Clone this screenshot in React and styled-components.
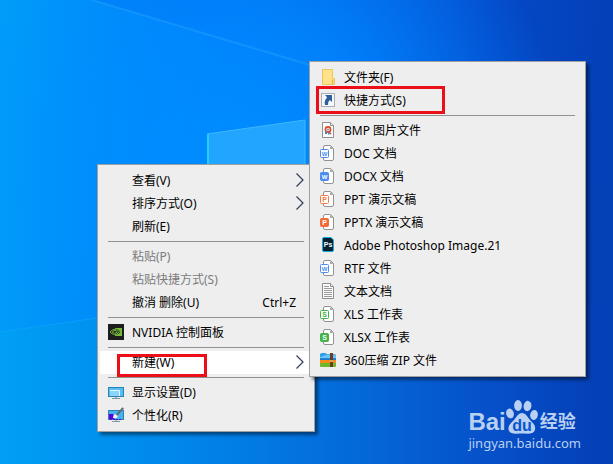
import styled, { createGlobalStyle, css } from "styled-components";

const GlobalStyle = createGlobalStyle`
  * {
    box-sizing: border-box;
  }

  body {
    margin: 0;
    font-family: 'Noto Sans', 'Noto Sans CJK SC', sans-serif;
  }
`;

const Desktop = styled.main`
  position: relative;
  min-height: 100vh;
  overflow: hidden;
  background: #0567dc;
`;

const WallpaperArt = styled.svg`
  position: absolute;
  inset: 0;
  width: 100%;
  height: 100%;
`;

const Menu = styled.div`
  position: absolute;
  top: ${({ $top }) => $top}px;
  left: ${({ $left }) => $left}px;
  width: ${({ $width }) => $width}px;
  padding: 4px 2px;
  background: #eeeeee;
  border: 1px solid #a0a0a0;
  box-shadow: 3px 3px 3px rgba(0, 0, 0, 0.45);
`;

const MenuItem = styled.button`
  display: flex;
  align-items: center;
  gap: 8px;
  width: 100%;
  height: 23px;
  padding: 3px 8px 4px;
  border: 0;
  background: ${({ $active }) => ($active ? "#ffffff" : "transparent")};
  color: #000;
  font-family: inherit;
  font-size: 12px;
  line-height: 16px;
  text-align: left;
  white-space: nowrap;

  &:hover {
    background: #ffffff;
  }

  &:disabled {
    color: #7b7b7b;
    background: transparent;
  }
`;

const IconSlot = styled.span`
  flex: none;
  width: 16px;
  height: 16px;

  svg {
    display: block;
  }
`;

const Label = styled.span`
  flex: 1;
  padding-top: 2px;
`;

const Shortcut = styled.span`
  padding: 2px 8px 0 0;
`;

const Separator = styled.hr`
  height: 1px;
  margin: 3px 8px;
  border: 0;
  background: #919191;
`;

const Highlight = styled.div`
  position: absolute;
  top: ${({ $top }) => $top}px;
  left: ${({ $left }) => $left}px;
  width: ${({ $width }) => $width}px;
  height: ${({ $height }) => $height}px;
  border: 3px solid #ec0f17;
  pointer-events: none;
`;

const watermarkText = css`
  color: #b9d0f2;
  white-space: nowrap;
`;

const Watermark = styled.div`
  position: absolute;
  right: 32px;
  bottom: 12px;
  ${watermarkText}
`;

const Brand = styled.div`
  display: flex;
  align-items: flex-end;
  height: 34px;
  font-family: 'Liberation Sans', 'Noto Sans CJK SC', sans-serif;
  font-size: 24px;
  font-weight: 700;
  line-height: 24px;
`;

const BrandName = styled.span`
  font-size: 18px;
  padding-left: 2px;
`;

const SiteLink = styled.a`
  ${watermarkText}
  display: block;
  font-size: 13px;
  line-height: 18px;
  text-decoration: none;
`;

function Wallpaper() {
  return (
    <WallpaperArt viewBox="0 0 613 464" preserveAspectRatio="xMinYMin slice" aria-hidden="true">
      <defs>
        <linearGradient id="sky" x1="0" y1="0" x2="613" y2="60" gradientUnits="userSpaceOnUse">
          <stop offset="0" stopColor="#0093f8" />
          <stop offset="0.3" stopColor="#0078f2" />
          <stop offset="0.55" stopColor="#0460e0" />
          <stop offset="0.8" stopColor="#0449c8" />
          <stop offset="1" stopColor="#0440b6" />
        </linearGradient>
        <radialGradient id="glow" cx="250" cy="150" r="310" gradientUnits="userSpaceOnUse">
          <stop offset="0" stopColor="#008cff" />
          <stop offset="0.4" stopColor="#0086ff" stopOpacity="0.85" />
          <stop offset="1" stopColor="#0080ff" stopOpacity="0" />
        </radialGradient>
        <linearGradient id="beam" x1="0" y1="0" x2="330" y2="0" gradientUnits="userSpaceOnUse">
          <stop offset="0" stopColor="#00a4fb" />
          <stop offset="1" stopColor="#0088ff" stopOpacity="0" />
        </linearGradient>
        <linearGradient id="floor" x1="0" y1="0" x2="613" y2="0" gradientUnits="userSpaceOnUse">
          <stop offset="0" stopColor="#009ff5" />
          <stop offset="0.3" stopColor="#0086ea" />
          <stop offset="0.55" stopColor="#046cdc" />
          <stop offset="0.8" stopColor="#0650c9" />
          <stop offset="0.94" stopColor="#0443bb" />
          <stop offset="1" stopColor="#0442b8" stopOpacity="0" />
        </linearGradient>
      </defs>
      <rect width="613" height="464" fill="url(#sky)" />
      <rect width="613" height="464" fill="url(#glow)" />
      <path d="M0 0h92l218 65v290L0 390z" fill="url(#beam)" opacity="0.6" />
      <path d="M0 332L97 318 330 340 613 300v164H0z" fill="url(#floor)" />
      <path d="M92 0L310 65" stroke="#1c9cff" strokeWidth="2" opacity="0.6" />
      <path d="M0 332L97 318" stroke="#1cb0ff" strokeWidth="1" opacity="0.4" />
      <path d="M207 134L305 120V260H207z" fill="#22a5ff" />
      <path d="M208 260V134" stroke="#22d0ff" strokeWidth="2" />
      <path d="M207 134L305 120V260" stroke="#3db8ff" fill="none" />
    </WallpaperArt>
  );
}

function Svg({ children }) {
  return (
    <svg width="16" height="16" viewBox="0 0 16 16" aria-hidden="true">
      {children}
    </svg>
  );
}

function Page({ x = 2 }) {
  return (
    <>
      <path d={`M${x + 0.5} 0.5H10.5L13.5 3.5V15.5H${x + 0.5}z`} fill="#fbfbfb" stroke="#8e8e8e" />
      <path d="M10.5 0.5V3.5H13.5" fill="#eeeeee" stroke="#8e8e8e" />
    </>
  );
}

function OfficeIcon({ color, letter, filled }) {
  return (
    <Svg>
      <path
        d="M3.5 4V2Q3.5 0.5 5 0.5H10.5L13.5 3.5V14Q13.5 15.5 12 15.5H5Q3.5 15.5 3.5 14z"
        fill="#fff"
        stroke="#929292"
      />
      <path d="M10 1V4H13.5z" fill="#a6a6a6" />
      <rect x="0.5" y="4.5" width="8" height="8" rx="1" fill={filled ? color : "#fff"} stroke={color} />
      <text
        x="4.5"
        y="11"
        fontSize={letter === "W" ? 6 : 7}
        fontWeight="700"
        fontFamily="Liberation Sans, sans-serif"
        textAnchor="middle"
        fill={filled ? "#fff" : color}
      >
        {letter}
      </text>
    </Svg>
  );
}

const FolderIcon = () => (
  <Svg>
    <path d="M2.5 0.5H12.5V9.5H14.5V15.5H2.5z" fill="#ffe28a" stroke="#e9c65c" />
    <path d="M12.5 10.5V15" stroke="#e0b43e" />
  </Svg>
);

const ShortcutIcon = () => (
  <Svg>
    <rect x="1.5" y="1.5" width="13" height="13" fill="#f6f8fb" stroke="#a9adb3" />
    <path d="M5 3H12V10L9.8 8Q7.5 9.8 8 13H5Q3.8 8.4 7.2 5.4z" fill="#2c5f9e" />
  </Svg>
);

const BmpIcon = () => (
  <Svg>
    <Page />
    <circle cx="8" cy="7.5" r="2.6" fill="#fff" stroke="#dc4b22" strokeWidth="1.6" />
    <circle cx="8" cy="7.5" r="1" fill="#5a87b8" />
    <path d="M9 10L11 12" stroke="#dc4b22" strokeWidth="1.6" />
    <path d="M5 9.5H7V12H5z" fill="#3c8bd6" />
    <path d="M8 10.5H9.5V12.5H8z" fill="#3c8bd6" />
  </Svg>
);

const PhotoshopIcon = () => (
  <Svg>
    <path d="M4 0.5H11L13.5 3V13Q13.5 14.5 12 14.5H4Q2.5 14.5 2.5 13V2Q2.5 0.5 4 0.5z" fill="#06202e" stroke="#12a8dc" />
    <text x="8" y="10" fontSize="7" fontWeight="700" fontFamily="Liberation Sans, sans-serif" textAnchor="middle" fill="#fff">
      Ps
    </text>
  </Svg>
);

const TextIcon = () => (
  <Svg>
    <Page />
    <path d="M4 3.5H9M4 5.5H12M4 7.5H12M4 9.5H12M4 11.5H12M4 13.5H12" stroke="#9a9a9a" />
  </Svg>
);

const ZipIcon = () => (
  <Svg>
    <path d="M0 3Q0 1 2 1H5L7 2H14Q16 2 16 4V7H0z" fill="#2a9be6" />
    <path d="M0 5L7 2.5H14L16 4V6H0z" fill="#6cc4f6" />
    <path d="M0 7H16V11H0z" fill="#f58a1f" />
    <path d="M0 6.5H16V8H0z" fill="#1d76c9" />
    <path d="M0 11H16V14Q16 15 15 15H1Q0 15 0 14z" fill="#6db82a" />
    <path d="M10 1H13V15H10z" fill="#6d3a1c" />
    <path d="M10 8H13V10H10z" fill="#d6a55a" />
  </Svg>
);

const NvidiaIcon = () => (
  <Svg>
    <rect width="16" height="16" fill="#1d1d1d" />
    <path d="M7 4H14V12H7z" fill="#76b93c" />
    <path d="M1.5 8Q5 3.6 9 5Q11.5 6 12.4 8Q9.5 11.5 6.5 11Q3.5 10.4 1.5 8z" fill="#1d1d1d" />
    <path d="M2 8Q5 4.4 8.4 5.2Q10.4 6 11.4 7.8Q9 10.8 6.6 10.6Q3.8 10.2 2 8z" fill="none" stroke="#76b93c" />
    <path d="M4.2 8Q6 6 8 6.6L9.4 7.8Q8 9.4 6.6 9.2Q5.2 9 4.2 8z" fill="none" stroke="#76b93c" />
  </Svg>
);

const DisplayIcon = () => (
  <Svg>
    <rect x="0.5" y="3.5" width="15" height="9" fill="#55bdf8" stroke="#3181ae" />
    <path d="M2 6.5H11.5V12" fill="none" stroke="#e8f7ff" />
    <path d="M2 7H11V12H2z" fill="#8ad5fb" />
    <path d="M7 13H9V14H7z" fill="#9ab4c2" />
    <path d="M4 14.5H12" stroke="#7d98a8" />
  </Svg>
);

const PersonalizeIcon = () => (
  <Svg>
    <rect x="0.5" y="3.5" width="15" height="9" fill="#45b2ef" stroke="#3181ae" />
    <path d="M1 7H5L7 12H1z" fill="#5a00e0" />
    <path d="M2 12.5H14" stroke="#4a10c8" strokeDasharray="2 1" />
    <path d="M5 11Q5 7.5 8 7L10 9Q9.5 12 5 11z" fill="#f1f1f1" />
    <path d="M8.6 8.2L15.2 0.8" stroke="#5c6873" strokeWidth="2" />
    <path d="M7 13H9V14H7z" fill="#9ab4c2" />
    <path d="M4 14.5H12" stroke="#7d98a8" />
  </Svg>
);

const Arrow = () => (
  <svg width="8" height="14" viewBox="0 0 8 14" aria-hidden="true">
    <path d="M0.5 0.5L7 7L0.5 13.5" fill="none" stroke="#333b58" strokeWidth="1.2" />
  </svg>
);

const PawLogo = () => (
  <svg width="32" height="34" viewBox="0 0 32 34" role="img" aria-label="du">
    <g fill="#b9d0f2">
      <ellipse cx="12" cy="5.5" rx="3.9" ry="5.4" />
      <ellipse cx="21.5" cy="6" rx="3.9" ry="5.2" transform="rotate(10 21.5 6)" />
      <ellipse cx="4" cy="13.5" rx="3.8" ry="5" transform="rotate(-15 4 13.5)" />
      <ellipse cx="28" cy="15" rx="3.8" ry="5" transform="rotate(10 28 15)" />
      <path d="M16 13C20 13 21.5 17 24 20C27 23 30 25.500 29 29.500C27.500 35 21 33.500 16 33.500S4 35 2.500 29.500C2 25.500 5 23 8 20C10.500 17 12 13 16 13z" />
    </g>
    <text x="16" y="31" fontSize="16" fontWeight="700" fontFamily="Liberation Sans, sans-serif" textAnchor="middle" fill="#0756cc">
      du
    </text>
  </svg>
);

const desktopMenu = [
  { label: "查看(V)", arrow: true },
  { label: "排序方式(O)", arrow: true },
  { label: "刷新(E)" },
  null,
  { label: "粘贴(P)", disabled: true },
  { label: "粘贴快捷方式(S)", disabled: true },
  { label: "撤消 删除(U)", shortcut: "Ctrl+Z" },
  null,
  { label: "NVIDIA 控制面板", icon: <NvidiaIcon /> },
  null,
  { label: "新建(W)", arrow: true, active: true },
  null,
  { label: "显示设置(D)", icon: <DisplayIcon /> },
  { label: "个性化(R)", icon: <PersonalizeIcon /> },
];

const newMenu = [
  { label: "文件夹(F)", icon: <FolderIcon /> },
  { label: "快捷方式(S)", icon: <ShortcutIcon /> },
  null,
  { label: "BMP 图片文件", icon: <BmpIcon /> },
  { label: "DOC 文档", icon: <OfficeIcon color="#4c8bf0" letter="W" /> },
  { label: "DOCX 文档", icon: <OfficeIcon color="#4c8bf0" letter="W" filled /> },
  { label: "PPT 演示文稿", icon: <OfficeIcon color="#f47a45" letter="P" /> },
  { label: "PPTX 演示文稿", icon: <OfficeIcon color="#f46a35" letter="P" filled /> },
  { label: "Adobe Photoshop Image.21", icon: <PhotoshopIcon /> },
  { label: "RTF 文件", icon: <OfficeIcon color="#4c8bf0" letter="W" /> },
  { label: "文本文档", icon: <TextIcon /> },
  { label: "XLS 工作表", icon: <OfficeIcon color="#41b349" letter="S" /> },
  { label: "XLSX 工作表", icon: <OfficeIcon color="#41b349" letter="S" filled /> },
  { label: "360压缩 ZIP 文件", icon: <ZipIcon /> },
];

function ContextMenu({ items, name, top, left, width }) {
  return (
    <Menu role="menu" aria-label={name} $top={top} $left={left} $width={width}>
      {items.map((item, i) =>
        item ? (
          <MenuItem key={i} type="button" role="menuitem" disabled={item.disabled} $active={item.active}>
            <IconSlot>{item.icon}</IconSlot>
            <Label>{item.label}</Label>
            {item.shortcut && <Shortcut>{item.shortcut}</Shortcut>}
            {item.arrow && <Arrow />}
          </MenuItem>
        ) : (
          <Separator key={i} />
        )
      )}
    </Menu>
  );
}

export default function App() {
  return (
    <>
      <GlobalStyle />
      <Desktop>
        <Wallpaper />
        <ContextMenu items={desktopMenu} name="桌面" top={164} left={97} width={218} />
        <ContextMenu items={newMenu} name="新建" top={61} left={309} width={277} />
        <Highlight $top={86} $left={316} $width={129} $height={28} />
        <Highlight $top={354} $left={117} $width={90} $height={23} />
        <Watermark>
          <Brand>
            <span>Bai</span>
            <PawLogo />
            <BrandName>经验</BrandName>
          </Brand>
          <SiteLink href="#jingyan">jingyan.baidu.com</SiteLink>
        </Watermark>
      </Desktop>
    </>
  );
}
